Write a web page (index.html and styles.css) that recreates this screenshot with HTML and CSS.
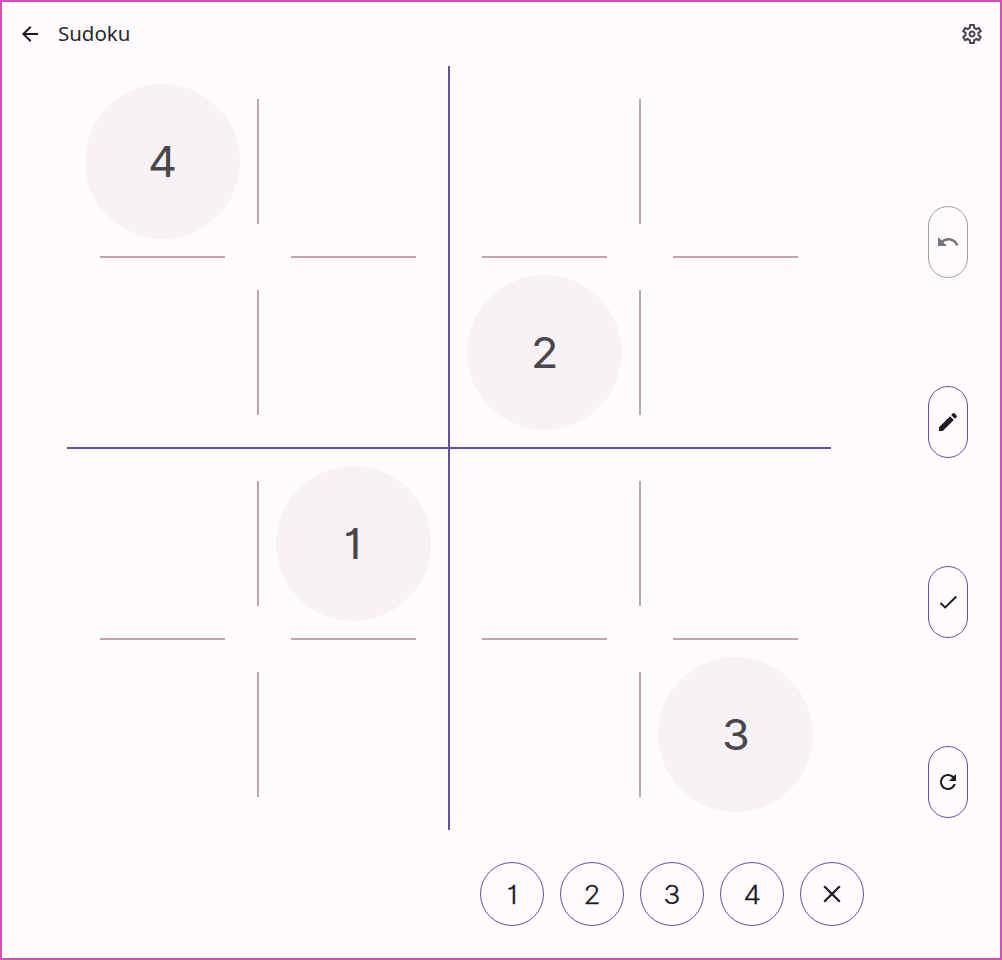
FILE: index.html
```html
<!DOCTYPE html>
<html lang="en">
<head>
<meta charset="utf-8">
<title>Sudoku</title>
<link rel="stylesheet" href="styles.css">
</head>
<body>
<div class="app">
  <header class="bar">
    <svg class="icon" viewBox="0 -960 960 960"><path d="m313-440 224 224-57 56-320-320 320-320 57 56-224 224h487v80H313Z"/></svg>
    <h1 class="title">Sudoku</h1>
    <svg class="icon settings" viewBox="0 -960 960 960"><path d="m370-80-16-128q-13-5-24.500-12T307-235l-119 50L78-375l103-78q-1-7-1-13.500v-27q0-6.500 1-13.500L78-585l110-190 119 50q11-8 23-15t24-12l16-128h220l16 128q13 5 24.500 12t22.500 15l119-50 110 190-103 78q1 7 1 13.500v27q0 6.500-2 13.500l103 78-110 190-118-50q-11 8-23 15t-24 12L590-80H370Zm70-80h79l14-106q31-8 57.500-23.500T639-327l99 41 39-68-86-65q5-14 7-29.500t2-31.500q0-16-2-31.500t-7-29.500l86-65-39-68-99 42q-22-23-48.500-38.500T533-694l-13-106h-79l-14 106q-31 8-57.500 23.500T321-633l-99-41-39 68 86 64q-5 15-7 30t-2 32q0 16 2 31t7 30l-86 65 39 68 99-42q22 23 48.500 38.500T427-266l13 106Zm42-180q58 0 99-41t41-99q0-58-41-99t-99-41q-59 0-99.500 41T342-480q0 58 40.500 99t99.500 41Zm0-80q-25 0-42.500-17.500T422-480q0-25 17.500-42.500T482-540q25 0 42.500 17.500T542-480q0 25-17.500 42.500T482-420Z"/></svg>
  </header>
  <main class="main">
    <div class="board">
      <div class="box">
        <div class="cell right bottom"><span class="given"><span class="digit">4</span></span></div><div class="cell bottom"></div>
        <div class="cell right"></div><div class="cell"></div>
      </div>
      <div class="box">
        <div class="cell right bottom"></div><div class="cell bottom"></div>
        <div class="cell right"><span class="given"><span class="digit">2</span></span></div><div class="cell"></div>
      </div>
      <div class="box">
        <div class="cell right bottom"></div><div class="cell bottom"><span class="given"><span class="digit one">1</span></span></div>
        <div class="cell right"></div><div class="cell"></div>
      </div>
      <div class="box">
        <div class="cell right bottom"></div><div class="cell bottom"></div>
        <div class="cell right"></div><div class="cell"><span class="given"><span class="digit">3</span></span></div>
      </div>
    </div>
    <div class="tools">
      <button class="tool disabled" aria-label="Undo"><svg class="icon" viewBox="0 0 24 24"><path d="M12.500 8c-2.650 0-5.050.990-6.900 2.600L2 7v9h9l-3.620-3.620c1.390-1.160 3.160-1.880 5.120-1.880 3.540 0 6.550 2.310 7.600 5.500l2.370-.78C21.080 11.030 17.150 8 12.500 8z"/></svg></button>
      <button class="tool" aria-label="Notes"><svg class="icon" viewBox="0 0 24 24"><path d="M3 17.250V21h3.750L17.810 9.940l-3.750-3.750L3 17.250zM20.710 7.040c.39-.39.39-1.020 0-1.410l-2.340-2.340c-.39-.39-1.020-.39-1.410 0l-1.830 1.830 3.750 3.750 1.830-1.830z"/></svg></button>
      <button class="tool" aria-label="Check"><svg class="icon line" viewBox="0 0 24 24"><path d="M4.400 13 9.200 17.400 20.300 6.500"/></svg></button>
      <button class="tool" aria-label="Restart"><svg class="icon" viewBox="0 0 24 24"><path d="M17.650 6.350C16.200 4.900 14.210 4 12 4c-4.420 0-7.990 3.580-7.990 8s3.570 8 7.990 8c3.730 0 6.840-2.550 7.730-6h-2.080c-.82 2.330-3.040 4-5.650 4-3.310 0-6-2.690-6-6s2.690-6 6-6c1.660 0 3.140.69 4.220 1.780L13 11h7V4l-2.350 2.350z"/></svg></button>
    </div>
  </main>
  <footer class="pad">
    <button class="key"><span class="digit">1</span></button>
    <button class="key"><span class="digit">2</span></button>
    <button class="key"><span class="digit">3</span></button>
    <button class="key"><span class="digit">4</span></button>
    <button class="key" aria-label="Erase"><svg class="icon line close" viewBox="0 0 28 28"><path d="M6.200 6.200 21.800 21.800M21.800 6.200 6.200 21.800"/></svg></button>
  </footer>
</div>
</body>
</html>
```
FILE: styles.css
```css
* { box-sizing: border-box; }
body { margin: 0; background: #fffbff; }
.app {
  width: 1002px; height: 960px;
  border: 2px solid #cf50b8;
  background: #fffbff;
  color: #1c1b1f;
  font-family: Inter, "Liberation Sans", sans-serif;
  display: flex; flex-direction: column;
}
.icon { width: 24px; height: 24px; fill: currentColor; display: block; flex: none; }
.line { fill: none; stroke: currentColor; stroke-width: 1.900px; }
.bar { height: 64px; padding: 0 16px; display: flex; align-items: center; }
.title { margin: 0 0 0 16px; padding-bottom: 2px; font: 400 20.500px/28px "Noto Sans", sans-serif; letter-spacing: -.05px; color: #2a292d; }
.settings { margin-left: auto; color: #49454f; }
.main { height: 764px; padding-left: 65px; display: flex; }
.board { width: 764px; height: 764px; display: grid; grid-template: repeat(2, 382px) / repeat(2, 382px);
  background:
    linear-gradient(#6750a4, #6750a4) center / 2px 100% no-repeat,
    linear-gradient(#6750a4, #6750a4) center / 100% 2px no-repeat; }
.box { display: grid; grid-template: repeat(2, 191px) / repeat(2, 191px); }
.cell { position: relative; display: flex; align-items: center; justify-content: center; }
.right::before, .bottom::after { content: ""; position: absolute; background: #bea6b1; }
.right::before { width: 2px; height: 125px; right: -1px; top: 33px; }
.bottom::after { height: 2px; width: 125px; bottom: -1px; left: 33px; }
.given {
  width: 155.500px; height: 155.500px; border-radius: 50%;
  background: #f6f2f6; color: #49474b;
  display: flex; align-items: center; justify-content: center;
  font-size: 42px; line-height: 1;
}
.digit { display: block; padding-top: 1px; font-weight: 400; transform: scaleX(1.07); font-feature-settings: "cv01"; }
.one { margin-right: 2px; }
.tools { width: 40px; height: 612px; margin: 140px 0 0 97px; display: flex; flex-direction: column; justify-content: space-between; }
.tool, .key { margin: 0; padding: 0; border: 1px solid #6750a4; background: none; color: #1c1b1f; font-family: inherit; display: flex; align-items: center; justify-content: center; }
.tool { width: 40px; height: 72px; border-radius: 20px; }
.disabled { color: #767478; border-color: #a29fa3; }
.pad { margin: 32px 0 0 478px; display: flex; gap: 16px; }
.key { width: 64px; height: 64px; border-radius: 50%; font-size: 26px; line-height: 1; }
.key .digit { padding-top: 2px; font-weight: 300; -webkit-text-stroke: .3px currentColor; }
.close { width: 28px; height: 28px; stroke-width: 2.300px; }
```
